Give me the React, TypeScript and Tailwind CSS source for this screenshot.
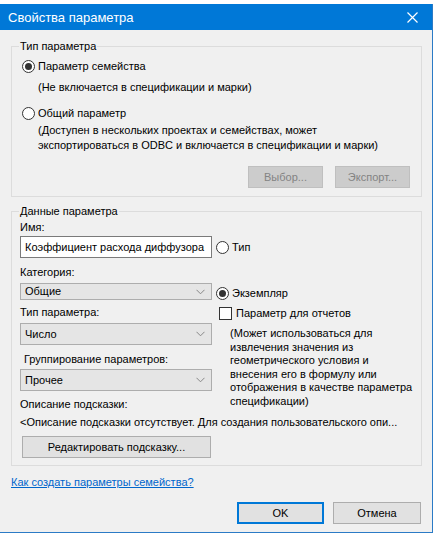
import React from 'react';

const font = { fontFamily: '"Segoe UI", "Liberation Sans", Arial, sans-serif' };

function Radio({ checked, label }: { checked?: boolean; label: string }) {
  return (
    <div className="flex items-center h-[16px]">
      <span className="w-[13px] h-[13px] rounded-full border border-[#333] bg-white flex items-center justify-center shrink-0">
        {checked && <span className="w-[7px] h-[7px] rounded-full bg-[#333]" />}
      </span>
      <span className="ml-[3px] text-[#000] whitespace-nowrap">{label}</span>
    </div>
  );
}

function Select({ value }: { value: string }) {
  return (
    <div className="w-[192px] h-[22px] bg-[#e5e5e5] border border-[#adadad] flex items-center justify-between pl-[4px] pr-[6px]">
      <span>{value}</span>
      <svg width="9" height="6" viewBox="0 0 9 6" className="shrink-0">
        <path d="M0.5 0.8 L4.5 4.8 L8.5 0.8" fill="none" stroke="#888" strokeWidth="1" />
      </svg>
    </div>
  );
}

function Btn({ children, disabled, primary, w }: { children: React.ReactNode; disabled?: boolean; primary?: boolean; w: string }) {
  const base = 'h-[22px] flex items-center justify-center whitespace-nowrap';
  if (disabled) return <div className={`${base} ${w} bg-[#cccccc] border border-[#bfbfbf] text-[#838383]`}>{children}</div>;
  if (primary) return <div className={`${base} ${w} bg-[#e1e1e1] border-2 border-[#0078d7]`}>{children}</div>;
  return <div className={`${base} ${w} bg-[#e1e1e1] border border-[#adadad]`}>{children}</div>;
}

export default function App() {
  return (
    <div className="w-[437px] h-[538px] bg-white overflow-hidden text-[11px] leading-[15px] text-black" style={font}>
      <div className="mt-[4px] w-[433px] h-[529px] flex flex-col bg-[#f0f0f0] border-r border-b border-[#2b7bc6]">
        {/* title bar */}
        <div className="h-[26px] bg-[#0078d7] flex items-center justify-between pl-[8px] pr-[14px] text-white">
          <span className="text-[13px]">Свойства параметра</span>
          <svg width="11" height="11" viewBox="0 0 11 11">
            <path d="M0.5 0.5 L10.5 10.5 M10.5 0.5 L0.5 10.5" stroke="#fff" strokeWidth="1.2" />
          </svg>
        </div>

        <div className="flex flex-col px-[11px] pt-[9px]">
          {/* Тип параметра */}
          <fieldset className="border border-[#dcdcdc] h-[158px] px-[10px] w-[411px]">
            <legend className="ml-[-3px] px-[1px] leading-[14px]">Тип параметра</legend>
            <div className="mt-[5px]">
              <Radio checked label="Параметр семейства" />
            </div>
            <div className="ml-[16px] mt-[6px] whitespace-nowrap">(Не включается в спецификации и марки)</div>
            <div className="mt-[10px]">
              <Radio label="Общий параметр" />
            </div>
            <div className="ml-[16px] mt-[2px] whitespace-nowrap">
              (Доступен в нескольких проектах и семействах, может
              <br />
              экспортироваться в ODBC и включается в спецификации и марки)
            </div>
            <div className="flex justify-end gap-[12px] mt-[13px] pr-[1px]">
              <Btn disabled w="w-[75px]">Выбор...</Btn>
              <Btn disabled w="w-[75px]">Экспорт...</Btn>
            </div>
          </fieldset>

          {/* Данные параметра */}
          <fieldset className="border border-[#dcdcdc] h-[262px] mt-[7px] pl-[8px] w-[411px]">
            <legend className="ml-[-1px] px-[1px] leading-[14px]">Данные параметра</legend>
            <div className="mt-[2px]">Имя:</div>
            <div className="flex items-center mt-[1px]">
              <div className="w-[192px] h-[22px] bg-white border border-[#7a7a7a] flex items-center pl-[4px] whitespace-nowrap">
                Коэффициент расхода диффузора
              </div>
              <div className="ml-[4px]">
                <Radio label="Тип" />
              </div>
            </div>
            <div className="mt-[7px]">Категория:</div>
            <div className="flex mt-[3px] h-[108px]">
              <div className="flex flex-col w-[192px]">
                <Select value="Общие" />
                <div className="mt-[5px]">Тип параметра:</div>
                <div className="mt-[3px]">
                  <Select value="Число" />
                </div>
                <div className="mt-[7px] ml-[4px]">Группирование параметров:</div>
                <div className="mt-[2px]">
                  <Select value="Прочее" />
                </div>
              </div>
              <div className="ml-[4px] flex flex-col">
                <div className="mt-[2px]">
                  <Radio checked label="Экземпляр" />
                </div>
                <div className="flex items-center mt-[5px] ml-[3px]">
                  <span className="w-[13px] h-[13px] border border-[#333] bg-white shrink-0" />
                  <span className="ml-[4px] whitespace-nowrap">Параметр для отчетов</span>
                </div>
                <div className="ml-[14px] mt-[6px] leading-[13.5px] whitespace-nowrap">
                  (Может использоваться для
                  <br />
                  извлечения значения из
                  <br />
                  геометрического условия и
                  <br />
                  внесения его в формулу или
                  <br />
                  отображения в качестве параметра
                  <br />
                  спецификации)
                </div>
              </div>
            </div>
            <div className="mt-[6px]">Описание подсказки:</div>
            <div className="mt-[3px] whitespace-nowrap">
              &lt;Описание подсказки отсутствует. Для создания пользовательского опи...
            </div>
            <div className="mt-[6px] ml-[2px]">
              <Btn w="w-[189px]">Редактировать подсказку...</Btn>
            </div>
          </fieldset>

          <div className="mt-[9px] text-[#0066cc] underline w-fit">Как создать параметры семейства?</div>

          <div className="flex justify-end gap-[9px] mt-[12px]">
            <Btn primary w="w-[87px]">OK</Btn>
            <Btn w="w-[88px]">Отмена</Btn>
          </div>
        </div>
      </div>
    </div>
  );
}
